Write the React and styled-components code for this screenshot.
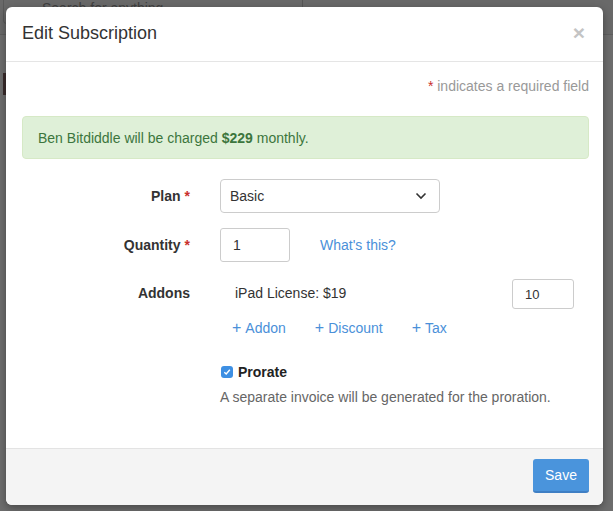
import React from 'react';
import styled, { createGlobalStyle } from 'styled-components';

const GlobalStyle = createGlobalStyle`
  html, body { margin: 0; padding: 0; }
  body {
    font-family: "Liberation Sans", Arial, sans-serif;
    color: #333;
    background: #6d6d6d;
  }
  * { box-sizing: border-box; }
`;

// page behind the dialog, dimmed
const Backdrop = styled.div`
  position: relative;
  width: 613px;
  height: 511px;
  overflow: hidden;
  background: #6d6d6d;
`;

const TopBar = styled.div`
  display: flex;
  height: 35px;
  border-bottom: 1px solid #5e5e5e;
  background: #696969;
`;

const SearchBox = styled.div`
  width: 300px;
  margin: -12px 0 0 3px;
  height: 36px;
  border: 1px solid #5a5a5a;
  border-radius: 4px;
  padding: 11px 0 0 38px;
  font-size: 14px;
  color: #3f3f3f;
  border-right-color: #555;
`;

const SideMark = styled.div`
  width: 3px;
  height: 22px;
  margin: 38px 0 0 3px;
  background: #3a2c2c;
`;

const Modal = styled.div`
  position: absolute;
  left: 6px;
  top: 7px;
  width: 597px;
  height: 498px;
  background: #fff;
  border-radius: 6px;
  box-shadow: 0 3px 9px rgba(0, 0, 0, 0.35);
  display: flex;
  flex-direction: column;
  overflow: hidden;
`;

const Header = styled.div`
  display: flex;
  align-items: center;
  justify-content: space-between;
  height: 55px;
  padding: 0 18px 2px 16px;
  border-bottom: 1px solid #e5e5e5;
`;

const Title = styled.h4`
  margin: 0;
  font-size: 18px;
  font-weight: normal;
  color: #333;
`;

const Close = styled.span`
  font-size: 21px;
  font-weight: bold;
  color: #c4c4c4;
  line-height: 1;
  margin-top: -2px;
`;

const Body = styled.div`
  flex: 1;
  padding: 16px 14px 0 16px;
`;

const RequiredNote = styled.div`
  text-align: right;
  font-size: 14px;
  color: #999;
`;

const Star = styled.span`
  color: #c9302c;
  margin-left: ${(p) => (p.$inline ? '4px' : '0')};
`;

const Alert = styled.div`
  margin-top: 22px;
  height: 43px;
  display: flex;
  align-items: center;
  padding: 0 15px;
  background: #dff0d8;
  border: 1px solid #d6e9c6;
  border-radius: 4px;
  color: #3c763d;
  font-size: 14px;
`;

const Form = styled.div`
  display: grid;
  grid-template-columns: 168px 1fr;
  column-gap: 30px;
  margin-top: 20px;
  font-size: 14px;
`;

const Label = styled.div`
  text-align: right;
  font-weight: bold;
  font-size: 14px;
  color: #333;
  padding-top: ${(p) => p.$top || '9px'};
`;

const Field = styled.div`
  display: flex;
  align-items: center;
  gap: 30px;
  margin-bottom: ${(p) => p.$mb || '15px'};
`;

const Select = styled.div`
  width: 220px;
  height: 34px;
  border: 1px solid #ccc;
  border-radius: 4px;
  display: flex;
  align-items: center;
  justify-content: space-between;
  padding: 0 12px 0 9px;
  font-size: 14px;
  color: #333;
`;

const Input = styled.div`
  width: ${(p) => p.$w || '70px'};
  height: ${(p) => p.$h || '34px'};
  border: 1px solid #ccc;
  border-radius: 3px;
  display: flex;
  align-items: center;
  padding-left: 12px;
  font-size: ${(p) => p.$fs || '14px'};
  color: #333;
`;

const Link = styled.span`
  color: #4a90d9;
  font-size: 14px;
`;

const Plus = styled.span`
  font-size: 16px;
  margin-right: 4px;
`;

const AddonCol = styled.div`
  display: flex;
  flex-direction: column;
`;

const AddonRow = styled.div`
  display: flex;
  justify-content: space-between;
  align-items: flex-start;
  width: 354px;
  padding-left: 15px;
  font-size: 14px;
  color: #333;
`;

const AddonName = styled.span`
  padding-top: 6px;
`;

const Actions = styled.div`
  display: flex;
  gap: 29px;
  padding-left: 12px;
  margin-top: 10px;
`;

const Prorate = styled.div`
  grid-column: 2;
  margin-top: 27px;
`;

const CheckRow = styled.label`
  display: flex;
  align-items: center;
  gap: 5px;
  font-weight: bold;
  font-size: 14px;
  color: #222;
  padding-left: 1px;
`;

const Box = styled.span`
  width: 12px;
  height: 12px;
  border-radius: 3px;
  background: #3d8fe3;
  display: inline-flex;
  align-items: center;
  justify-content: center;
`;

const Help = styled.div`
  margin-top: 9px;
  font-size: 14px;
  color: #666;
`;

const Footer = styled.div`
  height: 57px;
  background: #f4f4f4;
  border-top: 1px solid #e3e3e3;
  display: flex;
  align-items: center;
  justify-content: flex-end;
  padding: 0 14px 3px 0;
`;

const Button = styled.button`
  width: 56px;
  height: 34px;
  border: none;
  border-bottom: 2px solid #3f7fc4;
  border-radius: 3px;
  background: #4a94dc;
  color: #fff;
  font-family: inherit;
  font-size: 14px;
`;

export default function App() {
  return (
    <>
      <GlobalStyle />
      <Backdrop>
        <TopBar>
          <SearchBox>Search for anything</SearchBox>
        </TopBar>
        <SideMark />
        <Modal>
          <Header>
            <Title>Edit Subscription</Title>
            <Close>×</Close>
          </Header>
          <Body>
            <RequiredNote>
              <Star>*</Star> indicates a required field
            </RequiredNote>
            <Alert>
              <span>
                Ben Bitdiddle will be charged <b>$229</b> monthly.
              </span>
            </Alert>
            <Form>
              <Label>
                Plan<Star $inline>*</Star>
              </Label>
              <Field>
                <Select>
                  Basic
                  <svg width="12" height="8" viewBox="0 0 12 8">
                    <path d="M1.5 1.5 L6 6 L10.5 1.5" fill="none" stroke="#333" strokeWidth="1.6" />
                  </svg>
                </Select>
              </Field>
              <Label>
                Quantity<Star $inline>*</Star>
              </Label>
              <Field $mb="17px">
                <Input>1</Input>
                <Link>What's this?</Link>
              </Field>
              <Label $top="6px">Addons</Label>
              <AddonCol>
                <AddonRow>
                  <AddonName>iPad License: $19</AddonName>
                  <Input $w="62px" $h="30px" $fs="13px">10</Input>
                </AddonRow>
                <Actions>
                  <Link><Plus>+</Plus>Addon</Link>
                  <Link><Plus>+</Plus>Discount</Link>
                  <Link><Plus>+</Plus>Tax</Link>
                </Actions>
              </AddonCol>
              <Prorate>
                <CheckRow>
                  <Box>
                    <svg width="8" height="8" viewBox="0 0 8 8">
                      <path d="M1.3 4.2 L3.2 6 L6.8 1.8" fill="none" stroke="#fff" strokeWidth="1.4" />
                    </svg>
                  </Box>
                  Prorate
                </CheckRow>
                <Help>A separate invoice will be generated for the proration.</Help>
              </Prorate>
            </Form>
          </Body>
          <Footer>
            <Button>Save</Button>
          </Footer>
        </Modal>
      </Backdrop>
    </>
  );
}
